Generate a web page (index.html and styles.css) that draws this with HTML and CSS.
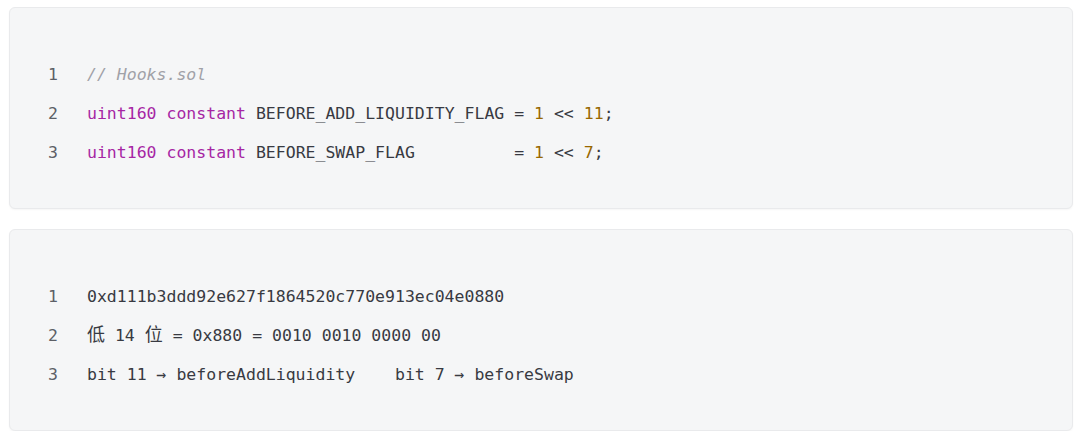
FILE: index.html
```html
<!DOCTYPE html>
<html lang="zh">
<head>
<meta charset="utf-8">
<title>Code</title>
<link rel="stylesheet" href="styles.css">
</head>
<body>
<main class="page">
  <section class="code-box">
    <div class="line"><span class="ln">1</span><span class="code"><span class="cm">// Hooks.sol</span></span></div>
    <div class="line"><span class="ln">2</span><span class="code"><span class="kw">uint160</span> <span class="kw">constant</span> BEFORE_ADD_LIQUIDITY_FLAG = <span class="num">1</span> &lt;&lt; <span class="num">11</span>;</span></div>
    <div class="line"><span class="ln">3</span><span class="code"><span class="kw">uint160</span> <span class="kw">constant</span> BEFORE_SWAP_FLAG          = <span class="num">1</span> &lt;&lt; <span class="num">7</span>;</span></div>
  </section>
  <section class="code-box">
    <div class="line"><span class="ln">1</span><span class="code">0xd111b3ddd92e627f1864520c770e913ec04e0880</span></div>
    <div class="line"><span class="ln">2</span><span class="code"><span class="cjk">低</span> 14 <span class="cjk">位</span> = 0x880 = 0010 0010 0000 00</span></div>
    <div class="line"><span class="ln">3</span><span class="code">bit 11 → beforeAddLiquidity    bit 7 → beforeSwap</span></div>
  </section>
</main>
</body>
</html>
```
FILE: styles.css
```css
html, body {
  margin: 0;
  padding: 0;
  background: #ffffff;
}

.page {
  display: flex;
  flex-direction: column;
  gap: 20px;
  padding: 7px 0 0 9px;
  width: 1064px;
}

.code-box {
  background: #f5f6f7;
  border: 1px solid #e9eaec;
  border-radius: 6px;
  box-shadow: 0 1px 2px rgba(0, 0, 0, 0.04);
  padding: 47px 38px 36px 38px;
  font-family: "DejaVu Sans Mono", "Noto Sans CJK SC", monospace;
  font-size: 16.5px;
  color: #383a42;
}

.line {
  display: flex;
  height: 39px;
  line-height: 39px;
  white-space: pre;
}

.ln {
  width: 39px;
  flex: none;
  color: #5c5f66;
}

.code {
  white-space: pre;
}

.kw {
  color: #a626a4;
}

.num {
  color: #986801;
}

.cm {
  color: #a0a1a7;
  font-style: italic;
}

.cjk {
  font-family: "Noto Sans CJK SC", sans-serif;
  font-size: 18px;
  line-height: 1;
}
```
